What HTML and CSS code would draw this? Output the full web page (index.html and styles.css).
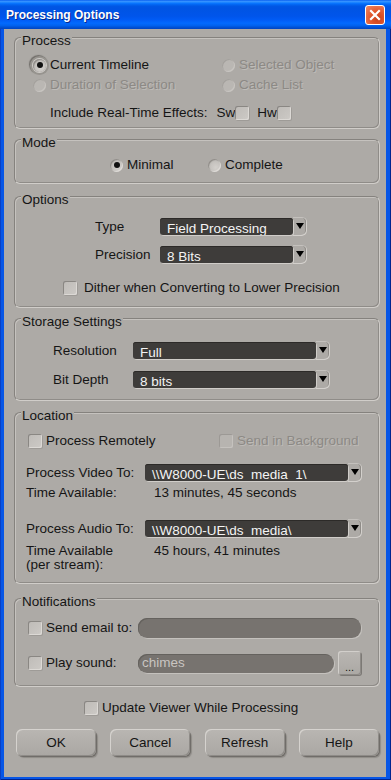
FILE: index.html
```html
<!DOCTYPE html>
<html lang="en">
<head>
    <meta charset="UTF-8">
    <meta name="viewport" content="width=device-width, initial-scale=1.0">
    <title>Processing Options</title>
    <link rel="stylesheet" href="styles.css">
</head>
<body>
    <div class="window">
        <div class="titlebar">
            <span class="title">Processing Options</span>
            <span class="close-btn">
                <svg width="12" height="12" viewBox="0 0 12 12"><path d="M2 2 L10 10 M10 2 L2 10" stroke="#fff" stroke-width="2.2" stroke-linecap="square"/></svg>
            </span>
        </div>

        <div class="panel">
            <fieldset class="group process">
                <legend>Process</legend>
                <div class="choices">
                    <span class="option"><span class="radio checked focus"></span>Current Timeline</span>
                    <span class="option disabled"><span class="radio"></span>Selected Object</span>
                    <span class="option disabled"><span class="radio"></span>Duration of Selection</span>
                    <span class="option disabled"><span class="radio"></span>Cache List</span>
                </div>
                <div class="rt-effects">
                    <span class="rt-label">Include Real-Time Effects:</span>
                    <span>Sw</span><span class="check"></span>
                    <span class="hw">Hw</span><span class="check"></span>
                </div>
            </fieldset>

            <fieldset class="group mode">
                <legend>Mode</legend>
                <div class="mode-row">
                    <span class="option mode-first"><span class="radio checked"></span>Minimal</span>
                    <span class="option"><span class="radio"></span>Complete</span>
                </div>
            </fieldset>

            <fieldset class="group options">
                <legend>Options</legend>
                <div class="field">
                    <span class="field-label">Type</span>
                    <div class="select"><span class="select-value">Field Processing</span><span class="select-arrow"></span></div>
                </div>
                <div class="field second">
                    <span class="field-label">Precision</span>
                    <div class="select"><span class="select-value">8 Bits</span><span class="select-arrow"></span></div>
                </div>
                <div class="option dither"><span class="check"></span>Dither when Converting to Lower Precision</div>
            </fieldset>

            <fieldset class="group storage">
                <legend>Storage Settings</legend>
                <div class="field">
                    <span class="field-label">Resolution</span>
                    <div class="select"><span class="select-value">Full</span><span class="select-arrow"></span></div>
                </div>
                <div class="field second">
                    <span class="field-label">Bit Depth</span>
                    <div class="select"><span class="select-value">8 bits</span><span class="select-arrow"></span></div>
                </div>
            </fieldset>

            <fieldset class="group location">
                <legend>Location</legend>
                <div class="location-checks">
                    <span class="option remote"><span class="check"></span>Process Remotely</span>
                    <span class="option disabled"><span class="check"></span>Send in Background</span>
                </div>
                <div class="field video">
                    <span class="field-label">Process Video To:</span>
                    <div class="select"><span class="select-value">\\W8000-UE\ds_media_1\</span><span class="select-arrow"></span></div>
                </div>
                <div class="info">
                    <span class="info-label">Time Available:</span>
                    <span>13 minutes, 45 seconds</span>
                </div>
                <div class="field audio">
                    <span class="field-label">Process Audio To:</span>
                    <div class="select"><span class="select-value">\\W8000-UE\ds_media\</span><span class="select-arrow"></span></div>
                </div>
                <div class="info per-stream">
                    <span class="info-label">Time Available<br>(per stream):</span>
                    <span>45 hours, 41 minutes</span>
                </div>
            </fieldset>

            <fieldset class="group notify">
                <legend>Notifications</legend>
                <div class="notify-row">
                    <span class="option notify-label"><span class="check"></span>Send email to:</span>
                    <span class="text-input email"></span>
                </div>
                <div class="notify-row sound">
                    <span class="option notify-label"><span class="check"></span>Play sound:</span>
                    <span class="text-input sound-input">chimes</span>
                    <span class="browse-btn">...</span>
                </div>
            </fieldset>

            <div class="update-row">
                <span class="option"><span class="check"></span>Update Viewer While Processing</span>
            </div>

            <div class="buttons">
                <button class="btn">OK</button>
                <button class="btn">Cancel</button>
                <button class="btn">Refresh</button>
                <button class="btn">Help</button>
            </div>
        </div>
    </div>
</body>
</html>
```

FILE: styles.css
```css
* {
    box-sizing: border-box;
}

body {
    margin: 0;
    font-family: "Liberation Sans", Arial, sans-serif;
    font-size: 13.5px;
    color: #151515;
}

.window {
    width: 391px;
    height: 780px;
    display: flex;
    flex-direction: column;
    background: #0756e6;
    box-shadow: inset 1px 0 0 #0a3fc4, inset -1px 0 0 #00248f, inset 0 -1px 0 #00248f;
}

/* title bar */
.titlebar {
    height: 29px;
    display: flex;
    align-items: center;
    justify-content: space-between;
    padding: 0 6px 0 6px;
    background: linear-gradient(to bottom, #0058ee 0%, #3a93ff 4%, #288eff 7%, #127dff 10%, #036ffc 13%, #0262ee 17%, #0057e5 22%, #0054e3 28%, #0055eb 56%, #005bf5 68%, #026afe 80%, #0062ef 88%, #0052d6 94%, #0045c0 100%);
}

.title {
    color: #fff;
    font-weight: bold;
    font-size: 12px;
    text-shadow: 1px 1px 0 #0a2a8c;
}

.close-btn {
    width: 20px;
    height: 20px;
    display: flex;
    align-items: center;
    justify-content: center;
    border: 1px solid #fff;
    border-radius: 3px;
    background: radial-gradient(circle at 65% 70%, #c8401a 0%, #e2592f 45%, #f08a66 100%);
}

/* dialog body */
.panel {
    flex: 1;
    margin: 0 5px 3px 4px;
    padding: 0 6px 0 10px;
    background: #adaaa6;
}

.group {
    margin: 0;
    padding: 0;
    min-width: 0;
    border: 1px solid;
    border-color: #85827e #d0cdc9 #d0cdc9 #85827e;
    border-radius: 6px;
    box-shadow: inset 1px 1px 0 #c5c2be, inset -1px -1px 0 #8f8c88;
}

.group legend {
    margin-left: 6px;
    padding: 7px 1px 0;
    line-height: 9px;
    background: #adaaa6;
}

.option {
    display: inline-flex;
    align-items: center;
    line-height: 20px;
    white-space: nowrap;
}

.option.disabled {
    color: #8c8985;
    text-shadow: 1px 1px 0 #bebbb7;
}

.radio {
    width: 13px;
    height: 13px;
    margin-right: 4px;
    border-radius: 50%;
    display: inline-flex;
    align-items: center;
    justify-content: center;
    background: radial-gradient(circle at 60% 65%, #d3d0cc 0%, #c2bfbb 60%, #a9a6a2 100%);
    box-shadow: inset 1px 1px 1px #8e8b87, inset -1px -1px 0 #dedbd7;
}

.radio.checked::after {
    content: "";
    width: 6px;
    height: 6px;
    border-radius: 50%;
    background: #111;
}

.radio.focus {
    box-shadow: inset 1px 1px 1px #8e8b87, 0 0 0 1px #cfccc8, 0 0 0 3px #97948f, -1px -1px 1px 3px #6f6c68;
}

.disabled .radio {
    background: #bab7b3;
    box-shadow: inset 1px 1px 0 #a4a19d, inset -1px -1px 0 #c8c5c1;
}

.check {
    width: 14px;
    height: 14px;
    margin-right: 4px;
    border-radius: 2px;
    background: linear-gradient(135deg, #bebbb7, #cdcac6);
    box-shadow: inset 1px 1px 0 #8a8783, inset -1px -1px 0 #dcd9d5, 1px 1px 0 #9e9b97;
}

.disabled .check {
    background: #b7b4b0;
    box-shadow: inset 1px 1px 0 #9c9995, inset -1px -1px 0 #c5c2be;
}

/* process */
.process {
    padding: 10px 0 5px;
}

.choices {
    display: grid;
    grid-template-columns: 189px auto;
    padding-left: 18px;
}

.rt-effects {
    display: flex;
    align-items: center;
    margin-top: 8px;
    padding-left: 35px;
    line-height: 20px;
}

.rt-label {
    margin-right: 9px;
}

.rt-effects .check {
    margin-right: 0;
}

.rt-effects .hw {
    margin-left: 8px;
}

/* mode */
.mode {
    margin-top: 2px;
    padding: 8px 0 8px;
}

.mode-row {
    display: flex;
    padding-left: 95px;
}

.mode-first {
    width: 98px;
}

/* dropdown rows */
.field {
    display: flex;
    align-items: flex-start;
    line-height: 18px;
    height: 18px;
}

.select {
    display: flex;
    height: 17px;
}

.select-value {
    flex: 1;
    padding: 2px 0 0 7px;
    line-height: 17px;
    overflow: hidden;
    white-space: nowrap;
    color: #f4f4f4;
    background: #3e3c3a;
    border-radius: 3px;
    box-shadow: 1px 1px 0 #d0cdc9, inset 0 1px 0 #2c2a28;
}

.select-arrow {
    width: 14px;
    margin-top: -1px;
    height: 19px;
    display: flex;
    justify-content: center;
    border-radius: 0 5px 5px 0;
    box-shadow: inset -1px -1px 0 #d3d0cc, inset 0 1px 0 #c4c1bd, inset -2px 0 0 #8f8c88;
}

.select-arrow::after {
    content: "";
    margin-top: 6px;
    border-left: 4px solid transparent;
    border-right: 4px solid transparent;
    border-top: 6px solid #000;
    height: 0;
}

.options {
    margin-top: 4px;
    padding: 14px 0 9px;
}

.options .field {
    padding-left: 80px;
}

.options .field-label {
    width: 65px;
}

.options .select {
    width: 147px;
}

.options .second {
    margin-top: 10px;
}

.dither {
    display: flex;
    margin-top: 14px;
    padding-left: 48px;
}

.dither .check {
    margin-right: 7px;
}

.storage {
    margin-top: 2px;
    padding: 16px 0 11px;
}

.storage .field {
    padding-left: 38px;
}

.storage .field-label {
    width: 80px;
}

.storage .select {
    width: 197px;
}

.storage .second {
    margin-top: 11px;
}

/* location */
.location {
    margin-top: 3px;
    padding: 11px 0 11px;
}

.location-checks {
    display: flex;
    padding-left: 13px;
}

.remote {
    width: 191px;
}

.location .field {
    padding-left: 11px;
}

.location .field-label {
    width: 119px;
}

.location .select {
    width: 217px;
}

.video {
    margin-top: 13px;
}

.audio {
    margin-top: 19px;
}

.info {
    display: flex;
    margin-top: 3px;
    padding-left: 11px;
    line-height: 16px;
}

.info-label {
    width: 128px;
}

.per-stream {
    margin-top: 6px;
    line-height: 14px;
}

/* notifications */
.notify {
    margin-top: 6px;
    padding: 12px 0 11px;
}

.notify-row {
    display: flex;
    align-items: center;
    height: 20px;
    padding-left: 13px;
}

.notify-row.sound {
    margin-top: 13px;
    height: 24px;
}

.notify-label {
    width: 110px;
}

.text-input {
    height: 20px;
    border-radius: 9px;
    background: #77736f;
    box-shadow: inset 1px 1px 0 #65625e, 1px 1px 0 #c4c1bd;
    color: #c9c5c1;
    line-height: 18px;
    padding-left: 4px;
}

.email {
    width: 223px;
}

.sound-input {
    width: 196px;
    height: 19px;
}

.browse-btn {
    width: 23px;
    height: 24px;
    margin-left: 4px;
    border-radius: 3px;
    display: flex;
    align-items: flex-end;
    justify-content: center;
    font-size: 11px;
    line-height: 16px;
    background: linear-gradient(#b9b6b2, #aba8a4);
    box-shadow: inset 1px 1px 0 #d2cfcb, inset -1px -1px 0 #8d8a86, 1px 1px 0 #7c7975;
}

/* footer */
.update-row {
    display: flex;
    margin-top: 11px;
    padding-left: 70px;
}

.buttons {
    display: flex;
    justify-content: space-between;
    margin-top: 11px;
    padding: 0 1px 0 2px;
}

.btn {
    width: 80px;
    height: 27px;
    padding: 0;
    border: none;
    border-radius: 6px;
    font-family: inherit;
    font-size: 13.5px;
    color: #151515;
    background: linear-gradient(#b9b6b2, #aaa7a3);
    box-shadow: inset 1px 1px 0 #d5d2ce, inset -1px -1px 0 #8e8b87, 1px 1px 0 #706d69, 2px 2px 1px #8f8c88;
}
```
